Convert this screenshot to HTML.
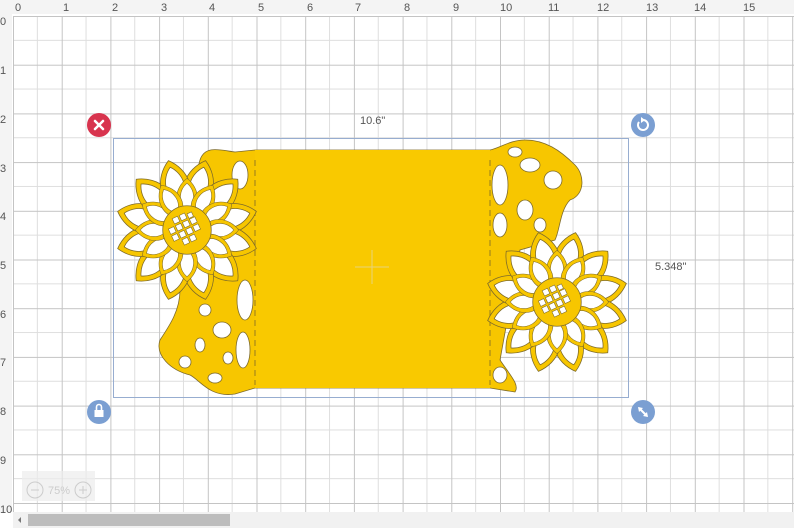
<!DOCTYPE html>
<html><head><style>
html,body{margin:0;padding:0;width:794px;height:528px;overflow:hidden;background:#fff;font-family:"Liberation Sans",sans-serif}
svg{display:block}
</style></head><body>
<svg width="794" height="528" viewBox="0 0 794 528" xmlns="http://www.w3.org/2000/svg">
<defs>
<pattern id="grid" x="13" y="16" width="48.7" height="48.7" patternUnits="userSpaceOnUse">
<path d="M24.35 0V48.7M0 24.35H48.7" stroke="#dedede" stroke-width="1" fill="none"/>
<path d="M0.5 0V48.7M0 0.5H48.7" stroke="#c4c4c4" stroke-width="1" fill="none"/>
</pattern>
<g id="petal">
<path d="M0,-20 C-22,-34 -18,-60 0,-74 C18,-60 22,-34 0,-20Z" fill="#f7c600" stroke="#7d6a2a" stroke-width="0.8"/>
<path d="M0,-29 C-14,-39 -11,-58 0,-67 C11,-58 14,-39 0,-29Z" fill="#fff" stroke="#7d6a2a" stroke-width="0.8"/>
</g>
<g id="flower">
<g transform="rotate(15)"><use href="#petal"/><use href="#petal" transform="rotate(30)"/><use href="#petal" transform="rotate(60)"/><use href="#petal" transform="rotate(90)"/><use href="#petal" transform="rotate(120)"/><use href="#petal" transform="rotate(150)"/><use href="#petal" transform="rotate(180)"/><use href="#petal" transform="rotate(210)"/><use href="#petal" transform="rotate(240)"/><use href="#petal" transform="rotate(270)"/><use href="#petal" transform="rotate(300)"/><use href="#petal" transform="rotate(330)"/></g>
<g transform="scale(0.72)"><use href="#petal"/><use href="#petal" transform="rotate(30)"/><use href="#petal" transform="rotate(60)"/><use href="#petal" transform="rotate(90)"/><use href="#petal" transform="rotate(120)"/><use href="#petal" transform="rotate(150)"/><use href="#petal" transform="rotate(180)"/><use href="#petal" transform="rotate(210)"/><use href="#petal" transform="rotate(240)"/><use href="#petal" transform="rotate(270)"/><use href="#petal" transform="rotate(300)"/><use href="#petal" transform="rotate(330)"/></g>
<circle r="25" fill="#f7c600" stroke="#7d6a2a" stroke-width="0.8"/>
<g fill="#fff" stroke="#7d6a2a" stroke-width="0.6" transform="rotate(-25)">
<rect x="-9" y="-17" width="6" height="6"/><rect x="-1" y="-17" width="6" height="6"/><rect x="7" y="-15" width="5" height="5"/>
<rect x="-17" y="-9" width="6" height="6"/><rect x="-9" y="-9" width="6" height="6"/><rect x="-1" y="-9" width="6" height="6"/><rect x="7" y="-9" width="6" height="6"/>
<rect x="-17" y="-1" width="6" height="6"/><rect x="-9" y="-1" width="6" height="6"/><rect x="-1" y="-1" width="6" height="6"/><rect x="7" y="-1" width="6" height="6"/>
<rect x="-9" y="7" width="6" height="6"/><rect x="-1" y="7" width="6" height="6"/>
</g>
</g>
</defs>
<rect width="794" height="528" fill="#fff"/>
<rect x="13" y="16" width="781" height="496" fill="url(#grid)"/>
<rect x="0" y="0" width="794" height="14" fill="#f4f4f4"/>
<rect x="0" y="0" width="12" height="512" fill="#f4f4f4"/>
<g font-size="11" fill="#555">
<text x="15" y="11">0</text><text x="63" y="11">1</text><text x="112" y="11">2</text><text x="161" y="11">3</text><text x="209" y="11">4</text><text x="258" y="11">5</text><text x="307" y="11">6</text><text x="355" y="11">7</text><text x="404" y="11">8</text><text x="453" y="11">9</text><text x="500" y="11">10</text><text x="548" y="11">11</text><text x="597" y="11">12</text><text x="646" y="11">13</text><text x="694" y="11">14</text><text x="743" y="11">15</text>
<text x="0" y="25">0</text><text x="0" y="74">1</text><text x="0" y="123">2</text><text x="0" y="172">3</text><text x="0" y="220">4</text><text x="0" y="269">5</text><text x="0" y="318">6</text><text x="0" y="366">7</text><text x="0" y="415">8</text><text x="0" y="464">9</text><text x="0" y="513">10</text>
</g>
<rect x="113.5" y="138.5" width="515" height="259" fill="none" stroke="#97add0" stroke-width="1"/>
<text x="360" y="124" font-size="11" fill="#555">10.6"</text>
<text x="655" y="270" font-size="11" fill="#555">5.348"</text>
<g stroke="#7d6a2a" stroke-width="0.8">
<path d="M200,160 C205,145 220,150 235,152 L255,150 L490,150 C500,148 510,140 525,140 C545,140 560,150 575,165 C585,175 585,195 570,200 C560,210 560,230 555,240 L520,250 L500,360 C510,375 520,385 515,392 L490,388 L255,388 L235,394 C210,398 200,380 190,375 C170,370 155,355 160,340 C170,325 180,310 180,290 L170,270 Z" fill="#f7c600"/>
<rect x="255" y="150" width="235" height="238" fill="#f9c900" stroke="none"/>
<path d="M255,160 V385 M490,160 V385" stroke="#7d6a2a" stroke-dasharray="6,4" fill="none"/>
<g fill="#fff">
<ellipse cx="245" cy="300" rx="8" ry="20"/><ellipse cx="243" cy="350" rx="7" ry="18"/><ellipse cx="222" cy="330" rx="9" ry="8"/><ellipse cx="205" cy="310" rx="6" ry="6"/><ellipse cx="185" cy="362" rx="6" ry="6"/><ellipse cx="215" cy="378" rx="7" ry="5"/><ellipse cx="240" cy="175" rx="8" ry="14"/><ellipse cx="200" cy="345" rx="5" ry="7"/><ellipse cx="228" cy="358" rx="5" ry="6"/>
<ellipse cx="500" cy="185" rx="8" ry="20"/><ellipse cx="500" cy="225" rx="7" ry="12"/><ellipse cx="530" cy="165" rx="10" ry="7"/><ellipse cx="553" cy="180" rx="9" ry="9"/><ellipse cx="525" cy="210" rx="8" ry="10"/><ellipse cx="500" cy="375" rx="7" ry="8"/><ellipse cx="515" cy="152" rx="7" ry="5"/><ellipse cx="540" cy="225" rx="6" ry="7"/>
</g>
</g>
<use href="#flower" transform="translate(187,230) scale(0.97)"/>
<use href="#flower" transform="translate(557,302) scale(0.97)"/>
<path d="M372,250V284M355,267H389" stroke="#e8d27a" stroke-width="1"/>
<circle cx="99" cy="125" r="12" fill="#d8344e"/>
<path d="M95,121L103,129M103,121L95,129" stroke="#fff" stroke-width="2.5" stroke-linecap="round"/>
<circle cx="643" cy="125" r="12" fill="#7b9fd2"/>
<path d="M639,122 A5,5 0 1 0 643,120" stroke="#fff" stroke-width="2" fill="none"/><path d="M641,117L645,120L641,123Z" fill="#fff"/>
<circle cx="99" cy="412" r="12" fill="#7b9fd2"/>
<rect x="94.5" y="410" width="9" height="7" fill="#fff"/><path d="M96.5,410V407A2.5,2.5 0 0 1 101.5,407V410" stroke="#fff" stroke-width="1.6" fill="none"/>
<circle cx="643" cy="412" r="12" fill="#7b9fd2"/>
<path d="M639,408L647,416" stroke="#fff" stroke-width="2"/><path d="M638,407L643,408L639,412Z M648,417L643,416L647,412Z" fill="#fff"/>
<rect x="22" y="471" width="73" height="30" fill="#ececec" opacity="0.7"/>
<circle cx="35" cy="490" r="8" fill="none" stroke="#ccc"/><path d="M31,490H39" stroke="#ccc"/>
<text x="48" y="494" font-size="11" fill="#ccc">75%</text>
<circle cx="83" cy="490" r="8" fill="none" stroke="#ccc"/><path d="M79,490H87M83,486V494" stroke="#ccc"/>
<rect x="13" y="512" width="781" height="16" fill="#f1f1f1"/>
<path d="M21,517L18,520L21,523Z" fill="#777"/>
<rect x="28" y="514" width="202" height="12" fill="#bdbdbd"/>
</svg>
</body></html>
